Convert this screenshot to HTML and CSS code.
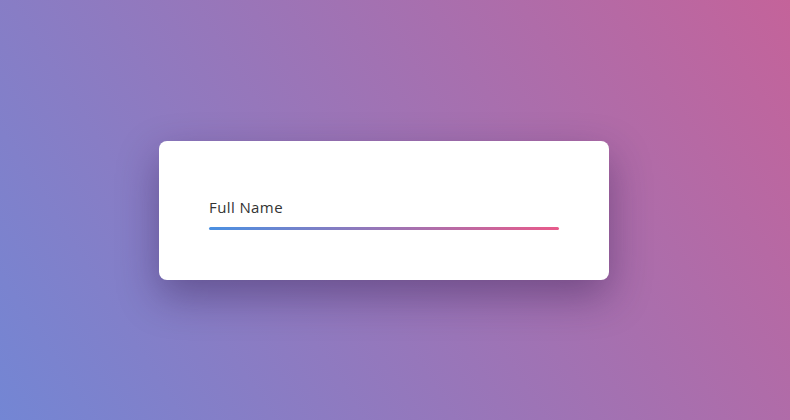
FILE: index.html
```html
<!doctype html>
<html>
  <head>
    <title>Full Name</title>
    <link rel="stylesheet" href="styles.css">
  </head>
  <body>
    <div class="card">
      <label class="field">
        <span class="field-label">Full Name</span>
        <span class="field-line"></span>
      </label>
    </div>
  </body>
</html>
```

FILE: styles.css
```css
* { margin: 0; padding: 0; box-sizing: border-box; }
html, body {
  width: 100%;
  height: 100%;
  overflow: hidden;
}
body {
  display: flex;
  align-items: center;
  justify-content: center;
  font-family: "Open Sans", sans-serif;
  background: linear-gradient(58deg, #7386d4, #c4639a);
}
.card {
  width: 450px;
  height: 139px;
  margin-right: 22px;
  padding: 54px 50px 46px;
  background: #fff;
  border-radius: 8px;
  box-shadow: 0 16px 40px rgba(40, 20, 70, 0.4);
}
.field {
  display: flex;
  flex-direction: column;
}
.field-label {
  font-size: 15px;
  line-height: 24px;
  letter-spacing: 0.4px;
  color: #333;
}
.field-line {
  display: block;
  height: 3px;
  margin-top: 8px;
  border-radius: 2px;
  background: linear-gradient(to right, #4a90e2, #e85a8a);
}
```
